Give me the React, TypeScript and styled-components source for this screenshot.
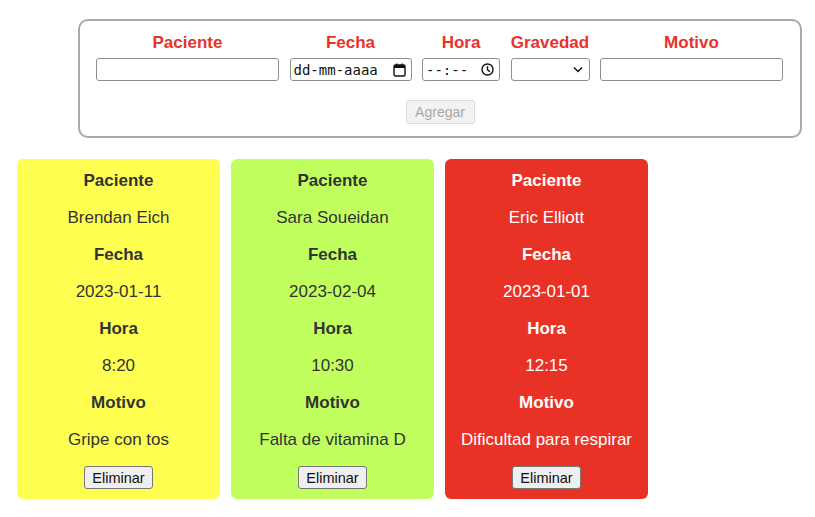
import React from "react";
import styled, { createGlobalStyle } from "styled-components";

const Global = createGlobalStyle`
  html, body { margin: 0; padding: 0; background: #fff; }
  body { font-family: "Liberation Sans", Arial, sans-serif; }
`;

const Page = styled.div`
  padding: 19px 14px 0 78px;
  width: 815px;
  box-sizing: border-box;
`;

const Form = styled.form`
  width: 724px;
  box-sizing: border-box;
  border: 2px solid #a9a9a9;
  border-radius: 10px;
  padding: 12px 16px 12px 16px;
  display: flex;
  flex-direction: column;
  align-items: center;
`;

const FieldsRow = styled.div`
  display: flex;
  gap: 10.5px;
  width: 100%;
`;

const Field = styled.label<{ $w: number }>`
  display: flex;
  flex-direction: column;
  align-items: center;
  width: ${(p) => p.$w}px;
  flex: 0 0 ${(p) => p.$w}px;
  gap: 5px;
`;

const FieldLabel = styled.span`
  color: #e8322a;
  font-weight: bold;
  font-size: 17px;
  line-height: 20px;
`;

const TextInput = styled.input`
  width: 100%;
  height: 23px;
  box-sizing: border-box;
  border: 1px solid #8f8f8f;
  border-radius: 3px;
  padding: 1px 3px;
  font-size: 13.33px;
  font-family: "Liberation Sans", Arial, sans-serif;
  background: #fff;
`;

const FakeInput = styled.div`
  width: 100%;
  height: 23px;
  box-sizing: border-box;
  border: 1px solid #8f8f8f;
  border-radius: 3px;
  padding: 0 5px 0 3px;
  display: flex;
  align-items: center;
  justify-content: space-between;
  background: #fff;
  font-family: "DejaVu Sans Mono", "Liberation Mono", monospace;
  font-size: 14px;
  color: #111;
`;

const SelectWrap = styled.div`
  position: relative;
  width: 100%;
  height: 23px;
`;

const Select = styled.select`
  appearance: none;
  width: 100%;
  height: 23px;
  box-sizing: border-box;
  border: 1px solid #8f8f8f;
  border-radius: 3px;
  background: #fff;
  font-size: 13.33px;
  font-family: "Liberation Sans", Arial, sans-serif;
`;

const Chevron = styled.svg`
  position: absolute;
  right: 7px;
  top: 8px;
  pointer-events: none;
`;

const AddButton = styled.button`
  margin-top: 19px;
  width: 69px;
  height: 24px;
  font-family: "Liberation Sans", Arial, sans-serif;
  font-size: 14px;
  color: #a8a8a8;
  background: #f2f2f2;
  border: 1px solid #dcdcdc;
  border-radius: 3px;
  padding: 0;
`;

const Cards = styled.div`
  display: flex;
  gap: 11px;
  margin: 21px 0 0 -61px;
`;

const Card = styled.div<{ $bg: string; $fg: string }>`
  width: 203px;
  height: 340px;
  box-sizing: border-box;
  background: ${(p) => p.$bg};
  color: ${(p) => p.$fg};
  border-radius: 6px;
  padding: 13px 0 10px;
  display: flex;
  flex-direction: column;
  align-items: center;
  text-align: center;
  font-size: 17px;
  line-height: 18px;
  gap: 19px;
`;

const CardTitle = styled.div`
  font-weight: bold;
`;

const CardValue = styled.div``;

const DeleteButton = styled.button`
  margin-top: -2px;
  width: 69px;
  height: 23px;
  font-family: "Liberation Sans", Arial, sans-serif;
  font-size: 14.5px;
  color: #111;
  background: #efefef;
  border: 1px solid #767676;
  border-radius: 3px;
  padding: 0;
`;

const CalendarIcon = () => (
  <svg width="13" height="14" viewBox="0 0 13 14">
    <rect x="1" y="2" width="11" height="11" rx="1.5" fill="none" stroke="#111" strokeWidth="1.4" />
    <rect x="1" y="2" width="11" height="3" fill="#111" />
    <rect x="3" y="0.5" width="1.4" height="2.5" fill="#111" />
    <rect x="8.6" y="0.5" width="1.4" height="2.5" fill="#111" />
  </svg>
);

const ClockIcon = () => (
  <svg width="13" height="13" viewBox="0 0 13 13">
    <circle cx="6.5" cy="6.5" r="5.5" fill="none" stroke="#111" strokeWidth="1.4" />
    <path d="M6.5 3.2 V6.8 L8.8 8.6" fill="none" stroke="#111" strokeWidth="1.4" />
  </svg>
);

type Cita = { paciente: string; fecha: string; hora: string; motivo: string; bg: string; fg: string };

const citas: Cita[] = [
  { paciente: "Brendan Eich", fecha: "2023-01-11", hora: "8:20", motivo: "Gripe con tos", bg: "#ffff52", fg: "#333" },
  { paciente: "Sara Soueidan", fecha: "2023-02-04", hora: "10:30", motivo: "Falta de vitamina D", bg: "#c1ff5e", fg: "#333" },
  { paciente: "Eric Elliott", fecha: "2023-01-01", hora: "12:15", motivo: "Dificultad para respirar", bg: "#e93226", fg: "#fff" },
];

export default function App() {
  return (
    <Page>
      <Global />
      <Form onSubmit={(e) => e.preventDefault()}>
        <FieldsRow>
          <Field $w={183}>
            <FieldLabel>Paciente</FieldLabel>
            <TextInput type="text" />
          </Field>
          <Field $w={122}>
            <FieldLabel>Fecha</FieldLabel>
            <FakeInput>
              <span>dd-mm-aaaa</span>
              <CalendarIcon />
            </FakeInput>
          </Field>
          <Field $w={78}>
            <FieldLabel>Hora</FieldLabel>
            <FakeInput>
              <span>--:--</span>
              <ClockIcon />
            </FakeInput>
          </Field>
          <Field $w={79}>
            <FieldLabel>Gravedad</FieldLabel>
            <SelectWrap>
              <Select defaultValue="">
                <option value=""></option>
                <option value="leve">Leve</option>
                <option value="media">Media</option>
                <option value="grave">Grave</option>
              </Select>
              <Chevron width="10" height="7" viewBox="0 0 10 7">
                <path d="M1 1.5 L5 5.5 L9 1.5" fill="none" stroke="#111" strokeWidth="1.5" />
              </Chevron>
            </SelectWrap>
          </Field>
          <Field $w={183}>
            <FieldLabel>Motivo</FieldLabel>
            <TextInput type="text" />
          </Field>
        </FieldsRow>
        <AddButton disabled>Agregar</AddButton>
      </Form>
      <Cards>
        {citas.map((c) => (
          <Card key={c.paciente} $bg={c.bg} $fg={c.fg}>
            <CardTitle>Paciente</CardTitle>
            <CardValue>{c.paciente}</CardValue>
            <CardTitle>Fecha</CardTitle>
            <CardValue>{c.fecha}</CardValue>
            <CardTitle>Hora</CardTitle>
            <CardValue>{c.hora}</CardValue>
            <CardTitle>Motivo</CardTitle>
            <CardValue>{c.motivo}</CardValue>
            <DeleteButton>Eliminar</DeleteButton>
          </Card>
        ))}
      </Cards>
    </Page>
  );
}
